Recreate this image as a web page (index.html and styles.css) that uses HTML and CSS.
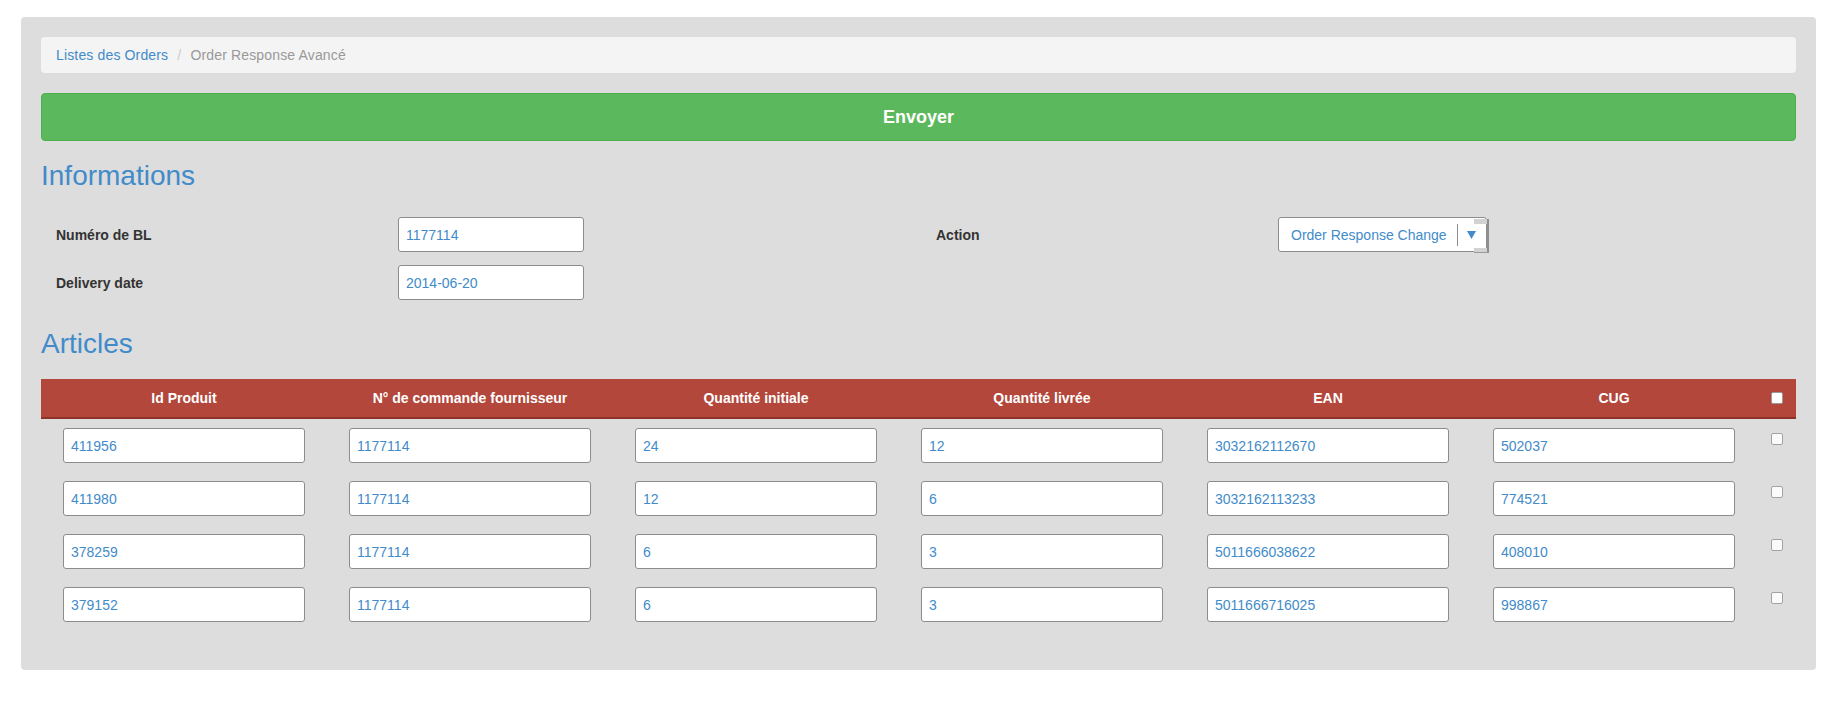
FILE: index.html
```html
<!DOCTYPE html>
<html lang="fr">
<head>
<meta charset="utf-8">
<title>Order Response Avancé</title>
<link rel="stylesheet" href="styles.css">
</head>
<body>
<div class="page">
  <div class="panel">
    <ol class="breadcrumb">
      <li><a href="#">Listes des Orders</a></li>
      <li class="active">Order Response Avancé</li>
    </ol>

    <button class="btn-send" type="button">Envoyer</button>

    <h3 class="section-title">Informations</h3>

    <div class="info-grid">
      <label class="info-label">Numéro de BL</label>
      <div class="info-field"><input class="field field-sm" type="text" value="1177114"></div>
      <label class="info-label">Action</label>
      <div class="info-field">
        <div class="select">
          <span class="select-text">Order Response Change</span>
          <span class="select-sep"></span>
          <svg class="select-arrow" width="9" height="8" viewBox="0 0 9 8"><path d="M0 0H9L4.5 8Z" fill="#428bca"/></svg>
        </div>
      </div>
      <label class="info-label">Delivery date</label>
      <div class="info-field"><input class="field field-sm" type="text" value="2014-06-20"></div>
    </div>

    <h3 class="section-title articles-title">Articles</h3>

    <table class="articles">
      <colgroup>
        <col class="col-data"><col class="col-data"><col class="col-data">
        <col class="col-data"><col class="col-data"><col class="col-data">
        <col class="col-check">
      </colgroup>
      <thead>
        <tr>
          <th>Id Produit</th>
          <th>N° de commande fournisseur</th>
          <th>Quantité initiale</th>
          <th>Quantité livrée</th>
          <th>EAN</th>
          <th>CUG</th>
          <th class="th-check"><input class="check check-head" type="checkbox"></th>
        </tr>
      </thead>
      <tbody>
        <tr>
          <td><input class="field" type="text" value="411956"></td>
          <td><input class="field" type="text" value="1177114"></td>
          <td><input class="field" type="text" value="24"></td>
          <td><input class="field" type="text" value="12"></td>
          <td><input class="field" type="text" value="3032162112670"></td>
          <td><input class="field" type="text" value="502037"></td>
          <td class="td-check"><input class="check" type="checkbox"></td>
        </tr>
        <tr>
          <td><input class="field" type="text" value="411980"></td>
          <td><input class="field" type="text" value="1177114"></td>
          <td><input class="field" type="text" value="12"></td>
          <td><input class="field" type="text" value="6"></td>
          <td><input class="field" type="text" value="3032162113233"></td>
          <td><input class="field" type="text" value="774521"></td>
          <td class="td-check"><input class="check" type="checkbox"></td>
        </tr>
        <tr>
          <td><input class="field" type="text" value="378259"></td>
          <td><input class="field" type="text" value="1177114"></td>
          <td><input class="field" type="text" value="6"></td>
          <td><input class="field" type="text" value="3"></td>
          <td><input class="field" type="text" value="5011666038622"></td>
          <td><input class="field" type="text" value="408010"></td>
          <td class="td-check"><input class="check" type="checkbox"></td>
        </tr>
        <tr>
          <td><input class="field" type="text" value="379152"></td>
          <td><input class="field" type="text" value="1177114"></td>
          <td><input class="field" type="text" value="6"></td>
          <td><input class="field" type="text" value="3"></td>
          <td><input class="field" type="text" value="5011666716025"></td>
          <td><input class="field" type="text" value="998867"></td>
          <td class="td-check"><input class="check" type="checkbox"></td>
        </tr>
      </tbody>
    </table>
  </div>
</div>
</body>
</html>
```

FILE: styles.css
```css
* { box-sizing: border-box; }

html, body {
  margin: 0;
  padding: 0;
  background: #ffffff;
}

body {
  font-family: "Liberation Sans", Arial, Helvetica, sans-serif;
  font-size: 14px;
  line-height: 20px;
  color: #333333;
}

.page {
  padding: 17px 18px 0 21px;
}

.panel {
  background: #dddddd;
  border-radius: 4px;
  padding: 20px 20px 20px 20px;
}

/* Breadcrumb */
.breadcrumb {
  list-style: none;
  margin: 0 0 20px 0;
  padding: 8px 15px;
  background: #f4f4f4;
  border-radius: 4px;
  line-height: 20px;
  letter-spacing: 0.15px;
}

.breadcrumb li {
  display: inline-block;
}

.breadcrumb li + li::before {
  content: "/\00a0";
  padding: 0 5px;
  color: #cccccc;
}

.breadcrumb a {
  color: #428bca;
  text-decoration: none;
}

.breadcrumb .active {
  color: #999999;
}

/* Send button */
.btn-send {
  display: block;
  width: 100%;
  margin: 0;
  padding: 11px 16px;
  line-height: 24px;
  font-family: inherit;
  font-size: 18px;
  font-weight: bold;
  color: #ffffff;
  background: #5cb85c;
  border: 1px solid #4cae4c;
  border-radius: 4px;
  text-align: center;
}

/* Headings */
.section-title {
  margin: 19px 0 26px 0;
  font-size: 28px;
  line-height: 31px;
  font-weight: normal;
  color: #428bca;
}

.articles-title {
  margin: 28px 0 20px 0;
}

/* Informations grid */
.info-grid {
  display: grid;
  grid-template-columns: 357px 523px 357px 1fr;
  row-gap: 13px;
  align-items: center;
}

.info-label {
  padding-left: 15px;
  font-weight: bold;
  color: #333333;
}

.field {
  display: block;
  width: 100%;
  height: 35px;
  margin: 0;
  padding: 0 7px;
  font-family: inherit;
  font-size: 14px;
  color: #428bca;
  background: #ffffff;
  border: 1px solid #8c8c8c;
  border-radius: 3px;
  outline: none;
}

.field-sm {
  width: 186px;
}

.select {
  position: relative;
  display: flex;
  align-items: center;
  width: 209px;
  height: 35px;
  padding-left: 12px;
  background: #ffffff;
  border: 1px solid #8c8c8c;
  border-radius: 3px;
  color: #428bca;
  white-space: nowrap;
}

.select-sep {
  width: 1px;
  height: 22px;
  margin-left: 10px;
  background: #8c8c8c;
}

.select-arrow {
  margin-left: 9px;
}

.select::after {
  content: "";
  position: absolute;
  top: 1px;
  right: -3px;
  bottom: -2px;
  width: 13px;
  border-right: 2px solid #8e8e8e;
  border-bottom: 1px solid #9a9a9a;
  background: linear-gradient(#d2d2d2 0, #d2d2d2 5px, transparent 5px, transparent calc(100% - 4px), #d2d2d2 calc(100% - 4px));
}

/* Articles table */
.articles {
  width: 100%;
  border-collapse: collapse;
  table-layout: fixed;
  margin-bottom: 19px;
}

.col-data { width: 286px; }
.col-check { width: auto; }

.articles th {
  padding: 9px 0;
  line-height: 20px;
  background: #b3473b;
  color: #ffffff;
  font-weight: bold;
  text-align: center;
  border-bottom: 2px solid #8f3329;
}

.articles td {
  padding: 9px 22px;
  vertical-align: top;
}

.articles td.td-check {
  padding: 14px 0 0 0;
  text-align: center;
}

.th-check {
  text-align: center;
}

.check {
  -webkit-appearance: none;
  appearance: none;
  display: inline-block;
  width: 12px;
  height: 12px;
  margin: 0;
  vertical-align: middle;
  background: #ffffff;
  border: 1px solid #a2a2a2;
  border-radius: 2px;
}

.check-head {
  position: relative;
  top: -1px;
  border-color: #9a9a9a;
}

.td-check .check {
  display: block;
  margin: 0 auto;
  background: #fbfbfb;
}
```
